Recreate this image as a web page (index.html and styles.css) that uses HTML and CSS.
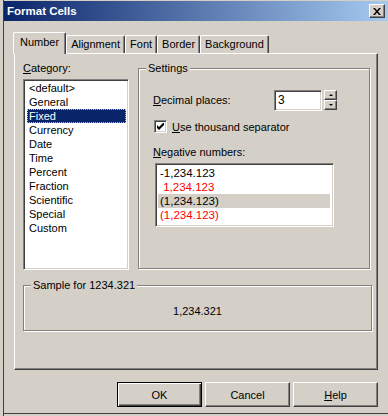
FILE: index.html
```html
<!DOCTYPE html>
<html lang="en">

<head>
    <meta charset="UTF-8">
    <title>Format Cells</title>
    <link rel="stylesheet" href="styles.css">
</head>

<body>
    <div class="window">
        <div class="titlebar">
            <span class="title">Format Cells</span>
            <button class="close-button">
                <svg width="8" height="7" viewBox="0 0 8 7">
                    <path d="M0 0h2l2 2.5 2-2.5h2L5 3.5 8 7H6L4 4.5 2 7H0l3-3.5z" fill="#000" />
                </svg>
            </button>
        </div>

        <div class="tabs">
            <div class="tab active">Number</div>
            <div class="tab">Alignment</div>
            <div class="tab">Font</div>
            <div class="tab">Border</div>
            <div class="tab">Background</div>
        </div>

        <div class="panel">
            <div class="top-row">
                <div class="category">
                    <div class="label"><u>C</u>ategory:</div>
                    <ul class="list category-list">
                        <li>&lt;default&gt;</li>
                        <li>General</li>
                        <li class="selected">Fixed</li>
                        <li>Currency</li>
                        <li>Date</li>
                        <li>Time</li>
                        <li>Percent</li>
                        <li>Fraction</li>
                        <li>Scientific</li>
                        <li>Special</li>
                        <li>Custom</li>
                    </ul>
                </div>

                <fieldset class="group settings">
                    <legend>Settings</legend>
                    <div class="field-row">
                        <span class="field-label"><u>D</u>ecimal places:</span>
                        <div class="spinner">
                            <input class="spinner-input" type="text" value="3">
                            <div class="spin-buttons">
                                <span class="spin-button"><i class="arrow-up"></i></span>
                                <span class="spin-button"><i class="arrow-down"></i></span>
                            </div>
                        </div>
                    </div>
                    <label class="check-row">
                        <span class="checkbox">
                            <svg width="7" height="7" viewBox="0 0 7 7">
                                <path d="M0 2v3l2 2 5-5V-1L2 4z" fill="#000" />
                            </svg>
                        </span>
                        <span><u>U</u>se thousand separator</span>
                    </label>
                    <div class="label negative-label"><u>N</u>egative numbers:</div>
                    <ul class="list negative-list">
                        <li>-1,234.123</li>
                        <li class="red">&nbsp;1,234.123</li>
                        <li class="current">(1,234.123)</li>
                        <li class="red">(1,234.123)</li>
                    </ul>
                </fieldset>
            </div>

            <fieldset class="group sample">
                <legend>Sample for 1234.321</legend>
                <div class="sample-value">1,234.321</div>
            </fieldset>
        </div>

        <div class="buttons">
            <button class="button default">OK</button>
            <button class="button">Cancel</button>
            <button class="button"><u>H</u>elp</button>
        </div>
    </div>
</body>

</html>
```

FILE: styles.css
```css
body {
    margin: 0;
    padding: 0;
    font-family: 'Liberation Sans', Arial, sans-serif;
    font-size: 11px;
    color: #000000;
    background: #d4d0c8;
}

.window {
    width: 388px;
    height: 416px;
    box-sizing: border-box;
    padding-left: 4px;
    background: #d4d0c8;
    box-shadow: inset 3px 0 0 #d4d0c8, inset 4px 0 0 #404040, inset 0 -2px 0 #d4d0c8, inset 0 -3px 0 #404040;
    display: flex;
    flex-direction: column;
}

/* title bar */
.titlebar {
    margin-top: 1px;
    height: 20px;
    display: flex;
    align-items: center;
    justify-content: space-between;
    padding: 0 3px 0 3px;
    background: linear-gradient(90deg, #0a246a, #a6caf0);
}

.title {
    color: #ffffff;
    font-weight: bold;
    font-size: 11.5px;
}

.close-button {
    width: 16px;
    height: 14px;
    padding: 0;
    display: flex;
    align-items: center;
    justify-content: center;
    background: #d4d0c8;
    border: 1px solid;
    border-color: #ffffff #404040 #404040 #ffffff;
    box-shadow: inset -1px -1px 0 #808080;
}

/* tabs */
.tabs {
    display: flex;
    align-items: flex-end;
    margin: 12px 0 0 9px;
    height: 20px;
    position: relative;
    z-index: 1;
}

.tab {
    height: 17px;
    line-height: 16px;
    padding: 0 4px;
    border-top: 1px solid #ffffff;
    border-left: 1px solid #ffffff;
    border-right: 1px solid #404040;
    border-radius: 2px 2px 0 0;
    box-shadow: inset -1px 0 0 #808080;
    background: #d4d0c8;
}

.tab.active {
    height: 21px;
    line-height: 18px;
    margin-bottom: -1px;
    padding: 0 6px;
}

/* panel */
.panel {
    margin-left: 10px;
    width: 364px;
    height: 317px;
    box-sizing: border-box;
    padding: 7px 6px 0 8px;
    border-top: 1px solid #ffffff;
    border-left: 1px solid #ffffff;
    border-right: 1px solid #404040;
    border-bottom: 1px solid #404040;
    box-shadow: inset -1px -1px 0 #808080;
}

.top-row {
    display: flex;
    align-items: flex-start;
}

.label {
    line-height: 14px;
}

.category {
    width: 106px;
    display: flex;
    flex-direction: column;
}

.list {
    list-style: none;
    margin: 0;
    padding: 0;
    background: #ffffff;
    border: 1px solid;
    border-color: #808080 #ffffff #ffffff #808080;
    box-shadow: inset 1px 1px 0 #404040, inset -1px -1px 0 #d4d0c8;
}

.list li {
    line-height: 14px;
    height: 14px;
    padding: 0 2px;
    white-space: nowrap;
}

.category-list {
    margin-top: 4px;
    height: 191px;
    box-sizing: border-box;
    padding: 1px 1px;
}

.category-list li {
    margin: 0 1px 0 2px;
}

.category-list li.selected {
    background: #0a246a;
    color: #ffffff;
    outline: 1px dotted #d8c060;
    outline-offset: -1px;
}

/* group boxes */
.group {
    margin: 0;
    box-sizing: border-box;
    border: 1px solid #808080;
    box-shadow: 1px 1px 0 #ffffff, inset 1px 1px 0 #ffffff;
}

.group legend {
    padding: 0 2px;
    line-height: 14px;
    background: #d4d0c8;
}

.settings {
    margin-left: 9px;
    width: 232px;
    height: 208px;
    padding: 15px 0 0 14px;
}

.settings legend {
    margin-left: -7px;
}

.field-row {
    display: flex;
    align-items: center;
    justify-content: space-between;
    height: 20px;
    padding-right: 32px;
}

.spinner {
    display: flex;
    gap: 1px;
}

.spinner-input {
    width: 48px;
    height: 21px;
    box-sizing: border-box;
    margin: 0;
    padding: 0 3px;
    font-family: inherit;
    font-size: 12px;
    border: 1px solid;
    border-color: #808080 #ffffff #ffffff #808080;
    box-shadow: inset 1px 1px 0 #404040, inset -1px -1px 0 #d4d0c8;
    outline: none;
}

.spin-buttons {
    display: flex;
    flex-direction: column;
    margin-left: 1px;
}

.spin-button {
    width: 13px;
    height: 10px;
    box-sizing: border-box;
    display: flex;
    align-items: center;
    justify-content: center;
    border: 1px solid;
    border-color: #ffffff #404040 #404040 #ffffff;
    box-shadow: inset -1px -1px 0 #808080;
}

.arrow-up,
.arrow-down {
    width: 0;
    height: 0;
    border-left: 2px solid transparent;
    border-right: 2px solid transparent;
}

.arrow-up {
    border-bottom: 2px solid #000000;
}

.arrow-down {
    border-top: 2px solid #000000;
}

.check-row {
    display: flex;
    align-items: center;
    gap: 5px;
    margin-top: 10px;
    height: 13px;
    margin-left: 1px;
}

.checkbox {
    width: 13px;
    height: 13px;
    box-sizing: border-box;
    display: flex;
    align-items: center;
    justify-content: center;
    background: #ffffff;
    border: 1px solid;
    border-color: #808080 #ffffff #ffffff #808080;
    box-shadow: inset 1px 1px 0 #404040, inset -1px -1px 0 #d4d0c8;
}

.negative-label {
    margin-top: 12px;
}

.negative-list {
    margin: 4px 0 0 2px;
    width: 179px;
    height: 64px;
    box-sizing: border-box;
    padding: 2px 3px 0 2px;
    font-size: 11.5px;
}

.negative-list li.red {
    color: #ff0000;
}

.negative-list li.current {
    background: #d4d0c8;
}

.sample {
    margin-top: 8px;
    width: 349px;
    height: 53px;
    padding: 12px 0 0 0;
}

.sample legend {
    margin-left: 7px;
}

.sample-value {
    text-align: center;
    line-height: 14px;
}

/* bottom buttons */
.buttons {
    display: flex;
    justify-content: flex-end;
    gap: 3px;
    margin-top: 12px;
    padding-right: 10px;
}

.button {
    width: 85px;
    height: 25px;
    font-family: inherit;
    font-size: 11px;
    color: #000000;
    background: #d4d0c8;
    border: 1px solid;
    border-color: #ffffff #404040 #404040 #ffffff;
    box-shadow: inset -1px -1px 0 #808080;
    padding: 0;
}

.button.default {
    border-color: #000000;
    box-shadow: inset 1px 1px 0 #ffffff, inset -1px -1px 0 #404040, inset -2px -2px 0 #808080;
}
```
